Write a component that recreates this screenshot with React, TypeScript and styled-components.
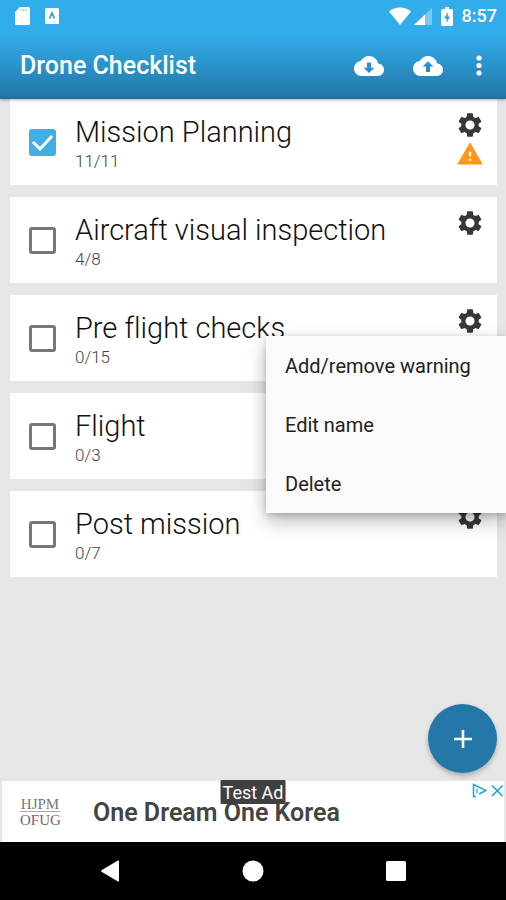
import React from "react";
import styled, { createGlobalStyle } from "styled-components";

const GlobalStyle = createGlobalStyle`
  *, *::before, *::after { box-sizing: border-box; }
  body {
    margin: 0;
    background: #e6e6e6;
    font-family: Roboto, "Liberation Sans", sans-serif;
    font-variant-ligatures: none;
    color: #222;
  }
  button, input { font: inherit; margin: 0; }
`;

const Screen = styled.div`
  display: flex;
  flex-direction: column;
  min-height: 100vh;
`;

const Header = styled.header`
  position: relative;
  z-index: 1;
  color: #fff;
  background: linear-gradient(#32adec 0, #32adec 34%, #2378a9 97%, #1a6da0 100%);
  box-shadow: 0 1px 3px rgba(0, 0, 0, 0.3);
`;

const StatusBar = styled.div`
  display: flex;
  align-items: center;
  height: 32px;
  padding: 0 9px 0 14px;
`;

const StatusGroup = styled.div<{ $gap: number }>`
  display: flex;
  align-items: center;
  gap: ${(p) => p.$gap}px;
`;

const StatusRight = styled(StatusGroup)`
  margin-left: auto;
`;

const Clock = styled.time`
  font-size: 18px;
  line-height: 20px;
  font-weight: 500;
`;

const Toolbar = styled.div`
  display: flex;
  align-items: center;
  height: 67px;
  padding: 0 9px 0 20px;
`;

const AppTitle = styled.h1`
  flex: 1;
  margin: 0;
  font-size: 25px;
  line-height: 32px;
  font-weight: 500;
`;

const IconButton = styled.button`
  display: grid;
  place-items: center;
  padding: 0;
  border: 0;
  background: none;
  color: inherit;
  cursor: pointer;
`;

const ToolbarButton = styled(IconButton)`
  width: 59px;
  height: 48px;
`;

const MoreButton = styled(IconButton)`
  width: 36px;
  height: 48px;
  margin-left: 4px;
`;

const Main = styled.main`
  position: relative;
  flex: 1;
  padding: 0 9px 96px 10px;
`;

const List = styled.ul`
  display: flex;
  flex-direction: column;
  gap: 12px;
  margin: 0;
  padding: 0;
  list-style: none;
`;

const Card = styled.li`
  position: relative;
  display: flex;
  align-items: center;
  min-height: 86px;
  padding: 0 13px 0 19px;
  background: #fff;
`;

const CheckWrap = styled.span`
  display: grid;
  width: 27px;
  height: 27px;
  & > * { grid-area: 1 / 1; }
  svg { pointer-events: none; }
`;

const Checkbox = styled.input`
  appearance: none;
  width: 27px;
  height: 27px;
  border: 3px solid #777;
  border-radius: 3px;
  &:checked { background: #41aee8; border-color: #41aee8; }
  &:not(:checked) + svg { visibility: hidden; }
`;

const CardText = styled.label`
  flex: 1;
  display: flex;
  flex-direction: column;
  padding: 4px 0 0 19px;
`;

const CardTitle = styled.span`
  font-size: 29px;
  line-height: 34px;
  font-weight: 300;
  color: #111;
`;

const CardCount = styled.span`
  font-size: 17px;
  line-height: 24px;
  font-weight: 300;
  color: #444;
`;

const CardActions = styled.div`
  display: flex;
  flex-direction: column;
  gap: 1px;
  align-self: flex-start;
  padding-top: 12px;
  color: #383838;
`;

const Menu = styled.div`
  position: absolute;
  z-index: 2;
  top: 41px;
  right: -9px;
  width: 240px;
  background: #fafafa;
  box-shadow: 0 8px 18px rgba(0, 0, 0, 0.28), 0 2px 6px rgba(0, 0, 0, 0.16);
`;

const MenuItem = styled.button`
  display: block;
  width: 100%;
  height: 59px;
  padding: 0 19px;
  border: 0;
  background: none;
  font-size: 20px;
  line-height: 24px;
  text-align: left;
  color: #222;
  cursor: pointer;
`;

const Fab = styled(IconButton)`
  position: absolute;
  right: 9px;
  bottom: 8px;
  width: 69px;
  height: 69px;
  border-radius: 50%;
  background: #2478a9;
  color: #fff;
  box-shadow: 0 3px 5px rgba(0, 0, 0, 0.25);
`;

const Ad = styled.aside`
  position: relative;
  display: flex;
  align-items: center;
  height: 61px;
  margin: 0 2px;
  padding-left: 18px;
  background: #fff;
`;

const AdLogo = styled.div`
  display: flex;
  flex-direction: column;
  width: 40px;
  font-family: "Liberation Serif", serif;
  font-size: 15px;
  line-height: 14px;
  text-align: center;
  color: #777;
`;

const AdLogoBottom = styled.span`
  border-top: 1px solid #aaa;
  padding-top: 1px;
  color: #85606b;
`;

const AdLink = styled.a`
  padding: 2px 0 0 33px;
  font-size: 25px;
  line-height: 30px;
  font-weight: 600;
  color: #444;
  text-decoration: none;
`;

const AdBadge = styled.span`
  position: absolute;
  top: -1px;
  left: 50%;
  transform: translateX(-50%);
  padding: 2px 2px 0;
  border-radius: 1px;
  background: #404040;
  color: #fff;
  font-size: 18px;
  line-height: 22px;
  white-space: nowrap;
`;

const AdControls = styled.div`
  position: absolute;
  top: 2px;
  right: 0;
  display: flex;
  gap: 4px;
  color: #1ba6cb;
`;

const NavBar = styled.nav`
  display: grid;
  grid-template-columns: repeat(3, 1fr);
  height: 58px;
  padding: 0 39px;
  background: #000;
  color: #fff;
`;

const CLOUD =
  "M19.35 10.04C18.67 6.59 15.64 4 12 4 9.11 4 6.6 5.64 5.35 8.04 2.34 8.36 0 10.91 0 14c0 3.31 2.69 6 6 6h13c2.76 0 5-2.24 5-5 0-2.64-2.05-4.78-4.65-4.96z";

const CloudIcon = ({ arrow }: { arrow: string }) => (
  <svg width="30" height="30" viewBox="0 0 24 24" fill="currentColor" fillRule="evenodd" aria-hidden="true">
    <path d={CLOUD + arrow} />
  </svg>
);

const GearIcon = () => (
  <svg width="28" height="28" viewBox="0 0 24 24" fill="currentColor" aria-hidden="true">
    <path d="M19.43 12.98c.04-.32.07-.64.07-.98s-.03-.66-.07-.98l2.11-1.65c.19-.15.24-.42.12-.64l-2-3.46c-.12-.22-.39-.3-.61-.22l-2.49 1c-.52-.4-1.08-.73-1.69-.98l-.38-2.65C14.46 2.18 14.25 2 14 2h-4c-.25 0-.46.18-.49.42l-.38 2.65c-.61.25-1.17.59-1.69.98l-2.49-1c-.23-.09-.49 0-.61.22l-2 3.46c-.13.22-.07.49.12.64l2.11 1.65c-.04.32-.07.65-.07.98s.03.66.07.98l-2.11 1.65c-.19.15-.24.42-.12.64l2 3.46c.12.22.39.3.61.22l2.49-1c.52.4 1.08.73 1.69.98l.38 2.65c.03.24.24.42.49.42h4c.25 0 .46-.18.49-.42l.38-2.65c.61-.25 1.17-.59 1.69-.98l2.49 1c.23.09.49 0 .61-.22l2-3.46c.12-.22.07-.49-.12-.64l-2.11-1.65zM12 15.9c-2.15 0-3.9-1.75-3.9-3.9s1.75-3.9 3.9-3.9 3.9 1.75 3.9 3.9-1.75 3.9-3.9 3.9z" />
  </svg>
);

const WarningIcon = () => (
  <svg width="28" height="28" viewBox="0 0 24 24" fill="#ff9615" role="img" aria-label="Warning">
    <path d="M1 21h22L12 2 1 21zm12-3h-2v-2h2v2zm0-4h-2v-4h2v4z" />
  </svg>
);

type Item = { title: string; count: string; checked?: boolean; warning?: boolean; menuOpen?: boolean };

const ITEMS: Item[] = [
  { title: "Mission Planning", count: "11/11", checked: true, warning: true },
  { title: "Aircraft visual inspection", count: "4/8" },
  { title: "Pre flight checks", count: "0/15", menuOpen: true },
  { title: "Flight", count: "0/3" },
  { title: "Post mission", count: "0/7" },
];

const ChecklistCard = ({ item, id }: { item: Item; id: string }) => (
  <Card>
    <CheckWrap>
      <Checkbox id={id} type="checkbox" defaultChecked={item.checked} />
      <svg width="27" height="27" viewBox="0 0 27 27" fill="none" stroke="#fff" strokeWidth="3" aria-hidden="true">
        <path d="M4 13l7 7L23 7" />
      </svg>
    </CheckWrap>
    <CardText htmlFor={id}>
      <CardTitle>{item.title}</CardTitle>
      <CardCount>{item.count}</CardCount>
    </CardText>
    <CardActions>
      <IconButton type="button" aria-label={`Options for ${item.title}`}>
        <GearIcon />
      </IconButton>
      {item.warning && <WarningIcon />}
    </CardActions>
    {item.menuOpen && (
      <Menu role="menu">
        <MenuItem type="button" role="menuitem">Add/remove warning</MenuItem>
        <MenuItem type="button" role="menuitem">Edit name</MenuItem>
        <MenuItem type="button" role="menuitem">Delete</MenuItem>
      </Menu>
    )}
  </Card>
);

export default function App() {
  return (
    <>
      <GlobalStyle />
      <Screen>
        <Header>
          <StatusBar>
            <StatusGroup $gap={14}>
              <svg width="17" height="20" viewBox="0 0 17 20" aria-hidden="true">
                <path d="M6 1h8.500a1.500 1.500 0 0 1 1.500 1.500v15a1.500 1.500 0 0 1-1.500 1.500h-12A1.500 1.500 0 0 1 1 17.500V6z" fill="#fff" />
                <path d="M7 3v2M9.500 3v2M12 3v2" stroke="#8fcdf0" strokeWidth="1.200" />
              </svg>
              <svg width="14" height="16" viewBox="0 0 14 16" aria-hidden="true">
                <rect width="14" height="16" rx="1.500" fill="#fff" />
                <path d="M4.500 10.500L7 5l2.500 5.500" fill="none" stroke="#3a9fd6" strokeWidth="1.800" />
                <path d="M7 13.500h5" stroke="#cfe9f7" />
              </svg>
            </StatusGroup>
            <StatusRight $gap={9}>
              <StatusGroup $gap={3}>
                <svg width="22" height="18" viewBox="0 0 22 18" aria-hidden="true">
                  <path d="M11 18L0 4.500C3 2 6.800 0.500 11 0.500S19 2 22 4.500z" fill="#fff" />
                </svg>
                <svg width="18" height="18" viewBox="0 0 18 18" aria-hidden="true">
                  <path d="M0 18L18 1v17z" fill="#fff" opacity="0.35" />
                  <path d="M0 18L11 7.600V18z" fill="#fff" />
                </svg>
              </StatusGroup>
              <svg width="12" height="19" viewBox="0 0 12 19" aria-hidden="true">
                <path d="M4 0h4v2h2.500A1.500 1.500 0 0 1 12 3.500v14a1.500 1.500 0 0 1-1.500 1.500h-9A1.500 1.500 0 0 1 0 17.500v-14A1.500 1.500 0 0 1 1.500 2H4z" fill="#fff" />
                <path d="M7 5L3 11.500h2.500V16L9 9.500H6.700z" fill="#2e9fdb" />
              </svg>
              <Clock>8:57</Clock>
            </StatusRight>
          </StatusBar>
          <Toolbar>
            <AppTitle>Drone Checklist</AppTitle>
            <ToolbarButton type="button" aria-label="Download">
              <CloudIcon arrow="M16.300 13.300l-4.300 4.200-4.300-4.200h2.700V9.200h3.200v4.100z" />
            </ToolbarButton>
            <ToolbarButton type="button" aria-label="Upload">
              <CloudIcon arrow="M16.300 12.400L12 8.200l-4.300 4.200h2.700v4.300h3.200v-4.300z" />
            </ToolbarButton>
            <MoreButton type="button" aria-label="More options">
              <svg width="6" height="22" viewBox="0 0 6 22" fill="currentColor" aria-hidden="true">
                <circle cx="3" cy="3" r="2.600" />
                <circle cx="3" cy="10.500" r="2.600" />
                <circle cx="3" cy="18" r="2.600" />
              </svg>
            </MoreButton>
          </Toolbar>
        </Header>

        <Main>
          <List>
            {ITEMS.map((item, i) => (
              <ChecklistCard key={item.title} item={item} id={`check-${i}`} />
            ))}
          </List>
          <Fab type="button" aria-label="Add checklist">
            <svg width="18" height="18" viewBox="0 0 18 18" stroke="currentColor" strokeWidth="2.600" aria-hidden="true">
              <path d="M9 0v18M0 9h18" />
            </svg>
          </Fab>
        </Main>

        <Ad>
          <AdLogo>
            <span>HJPM</span>
            <AdLogoBottom>OFUG</AdLogoBottom>
          </AdLogo>
          <AdLink href="#ad">One Dream One Korea</AdLink>
          <AdBadge>Test Ad</AdBadge>
          <AdControls>
            <IconButton type="button" aria-label="Ad choices">
              <svg width="15" height="15" viewBox="0 0 15 15" fill="none" stroke="currentColor" strokeWidth="1.500" aria-hidden="true">
                <path d="M4 13.500H1.500v-12L14 7.500 7 11" />
                <path d="M5 5.500v5" strokeWidth="1.200" />
              </svg>
            </IconButton>
            <IconButton type="button" aria-label="Close ad">
              <svg width="13" height="15" viewBox="0 0 13 15" stroke="currentColor" strokeWidth="1.600" aria-hidden="true">
                <path d="M1 2.500l10.500 10.500M11.500 2.500L1 13" />
              </svg>
            </IconButton>
          </AdControls>
        </Ad>

        <NavBar aria-label="System">
          <IconButton type="button" aria-label="Back">
            <svg width="20" height="22" viewBox="0 0 20 22" fill="currentColor" aria-hidden="true">
              <path d="M1.500 10.200L18 .6q1-.5 1 .6v19.600q0 1.100-1 .6L1.500 11.800q-1-.8 0-1.600z" />
            </svg>
          </IconButton>
          <IconButton type="button" aria-label="Home">
            <svg width="22" height="22" viewBox="0 0 22 22" fill="currentColor" aria-hidden="true">
              <circle cx="11" cy="11" r="10.500" />
            </svg>
          </IconButton>
          <IconButton type="button" aria-label="Recent apps">
            <svg width="20" height="20" viewBox="0 0 20 20" fill="currentColor" aria-hidden="true">
              <rect width="20" height="20" rx="1.500" />
            </svg>
          </IconButton>
        </NavBar>
      </Screen>
    </>
  );
}
